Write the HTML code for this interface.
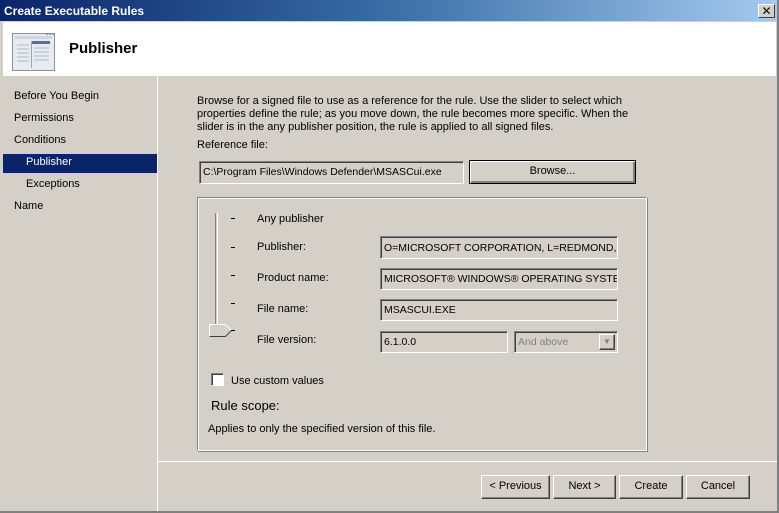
<!DOCTYPE html>
<html><head><style>
*{margin:0;padding:0;box-sizing:border-box}
body{width:779px;height:513px;background:#d4d0c8;font-family:Tahoma,"Liberation Sans","DejaVu Sans",sans-serif;font-size:11px;color:#000;position:relative;overflow:hidden}
.a{position:absolute}
.title{left:0;top:0;width:779px;height:22px;background:linear-gradient(to right,#0a246a,#3a6ea5 50%,#a6caf0);color:#fff;font-weight:bold;font-size:12px;padding:4px 0 0 4px;border-bottom:1px solid #d4d0c8}
.x{left:758px;top:4px;width:17px;height:14px;background:#d4d0c8;border:1px solid;border-color:#fff #404040 #404040 #fff;font-size:12px;font-weight:bold;text-align:center;line-height:12px;color:#000}
.hdr{left:3px;top:22px;width:773px;height:54px;background:#fff}
.tb{background:#d4d0c8;border:1px solid;border-color:#808080 #fff #fff #808080;box-shadow:inset 1px 1px 0 #404040;padding:4px 2px 0 3px;white-space:nowrap;overflow:hidden;font-size:10.5px}
.btn{background:#d4d0c8;border:1px solid;border-color:#fff #404040 #404040 #fff;box-shadow:inset -1px -1px 0 #808080;text-align:center;line-height:20px}
.nav{left:14px}
.d{left:231px;width:4px;height:1px;background:#000}
</style></head><body>
<div class="a title">Create Executable Rules</div>
<div class="a x">✕</div>
<div class="a hdr"></div>
<svg class="a" style="left:12px;top:33px" width="46" height="40"><rect x="0.5" y="0.5" width="42" height="37" fill="#e8ecf2" stroke="#8a8f98"/><rect x="3" y="3" width="37" height="3" fill="#cdd6e2"/><rect x="20" y="8" width="18" height="3" fill="#5a7090"/><line x1="19.5" y1="8" x2="19.5" y2="35" stroke="#9aa"/><g stroke="#b0b8c4"><line x1="5" y1="12" x2="17" y2="12"/><line x1="5" y1="16" x2="17" y2="16"/><line x1="5" y1="20" x2="17" y2="20"/><line x1="5" y1="24" x2="17" y2="24"/><line x1="5" y1="28" x2="17" y2="28"/><line x1="22" y1="15" x2="37" y2="15"/><line x1="22" y1="19" x2="37" y2="19"/><line x1="22" y1="23" x2="37" y2="23"/><line x1="22" y1="27" x2="37" y2="27"/></g><g fill="#999"><rect x="34" y="1" width="2" height="1"/><rect x="37" y="1" width="2" height="1"/><rect x="40" y="1" width="2" height="1"/></g></svg>
<div class="a" style="left:69px;top:40px;font-size:15px;font-weight:bold">Publisher</div>
<div class="a" style="left:157px;top:76px;width:1px;height:437px;background:#fff"></div>
<div class="a" style="left:158px;top:461px;width:621px;height:1px;background:#fff"></div>
<div class="a nav" style="top:90px">Before You Begin</div>
<div class="a nav" style="top:112px">Permissions</div>
<div class="a nav" style="top:134px">Conditions</div>
<div class="a" style="left:3px;top:154px;width:154px;height:19px;background:#0a246a"></div>
<div class="a" style="left:26px;top:156px;color:#fff">Publisher</div>
<div class="a" style="left:26px;top:178px">Exceptions</div>
<div class="a nav" style="top:200px">Name</div>
<div class="a" style="left:197px;top:95px;width:440px;line-height:13px">Browse for a signed file to use as a reference for the rule. Use the slider to select which properties define the rule; as you move down, the rule becomes more specific. When the slider is in the any publisher position, the rule is applied to all signed files.</div>
<div class="a" style="left:197px;top:139px">Reference file:</div>
<div class="a tb" style="left:199px;top:161px;width:265px;height:23px">C:\Program Files\Windows Defender\MSASCui.exe</div>
<div class="a btn" style="left:469px;top:160px;width:167px;height:24px;border-color:#000;box-shadow:inset 1px 1px 0 #fff,inset -2px -2px 0 #808080">Browse...</div>
<div class="a" style="left:197px;top:197px;width:450px;height:254px;border:1px solid;border-color:#808080 #fff #fff #808080;box-shadow:inset 1px 1px 0 #fff,1px 1px 0 #808080"></div>
<div class="a" style="left:215px;top:213px;width:3px;height:120px;border-left:1px solid #808080;border-right:1px solid #fff"></div>
<svg class="a" style="left:209px;top:324px" width="25" height="13"><path d="M0.5 0.5H16.5L22.5 6.5L16.5 12.5H0.5Z" fill="#d4d0c8" stroke="#fff"/><path d="M0.5 12.5H16.5L22.5 6.5" fill="none" stroke="#404040"/></svg>
<div class="a d" style="top:218px"></div>
<div class="a d" style="top:247px"></div>
<div class="a d" style="top:275px"></div>
<div class="a d" style="top:303px"></div>
<div class="a d" style="top:330px"></div>
<div class="a" style="left:257px;top:213px">Any publisher</div>
<div class="a" style="left:257px;top:241px">Publisher:</div>
<div class="a" style="left:257px;top:272px">Product name:</div>
<div class="a" style="left:257px;top:303px">File name:</div>
<div class="a" style="left:257px;top:334px">File version:</div>
<div class="a tb" style="left:380px;top:236px;width:238px;height:23px;padding-top:5px">O=MICROSOFT CORPORATION, L=REDMOND, S=WASHINGTON</div>
<div class="a tb" style="left:380px;top:268px;width:238px;height:22px">MICROSOFT® WINDOWS® OPERATING SYSTEM</div>
<div class="a tb" style="left:380px;top:299px;width:238px;height:22px">MSASCUI.EXE</div>
<div class="a tb" style="left:380px;top:331px;width:128px;height:22px">6.1.0.0</div>
<div class="a tb" style="left:514px;top:331px;width:104px;height:22px;color:#808080">And above</div>
<div class="a btn" style="left:599px;top:334px;width:16px;height:16px;line-height:14px;font-size:8px;color:#808080">▼</div>
<div class="a" style="left:211px;top:373px;width:13px;height:13px;background:#fff;border:1px solid;border-color:#808080 #fff #fff #808080;box-shadow:inset 1px 1px 0 #404040"></div>
<div class="a" style="left:231px;top:375px">Use custom values</div>
<div class="a" style="left:211px;top:398px;font-size:13px">Rule scope:</div>
<div class="a" style="left:208px;top:423px">Applies to only the specified version of this file.</div>
<div class="a btn" style="left:481px;top:475px;width:69px;height:24px">&lt; Previous</div>
<div class="a btn" style="left:553px;top:475px;width:63px;height:24px">Next &gt;</div>
<div class="a btn" style="left:619px;top:475px;width:64px;height:24px">Create</div>
<div class="a btn" style="left:686px;top:475px;width:64px;height:24px">Cancel</div>
<div class="a" style="left:0;top:511px;width:779px;height:2px;background:#808080"></div>
<div class="a" style="left:777px;top:0;width:2px;height:513px;background:#808080"></div>
</body></html>
